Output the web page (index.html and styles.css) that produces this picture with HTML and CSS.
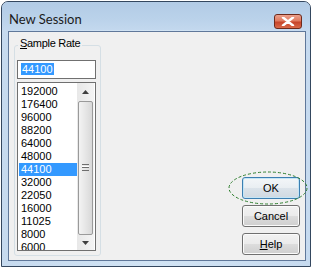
FILE: index.html
```html
<!DOCTYPE html>
<html>
<head>
<meta charset="utf-8">
<link rel="stylesheet" href="styles.css">
</head>
<body>
<div class="window">
  <div class="titlebar">
    <span class="title">New Session</span>
    <div class="close">
      <svg width="14" height="9" viewBox="0 0 14 9"><path d="M2 0.5 L12 8.5 M12 0.5 L2 8.5" stroke="#ffffff" stroke-width="2.4" stroke-linecap="round"/></svg>
    </div>
  </div>
  <div class="client">
    <div class="group">
      <span class="legend"><u>S</u>ample Rate</span>
      <div class="edit"><span class="sel">44100</span></div>
      <div class="list">
        <div class="items">
          <div class="item">192000</div>
          <div class="item">176400</div>
          <div class="item">96000</div>
          <div class="item">88200</div>
          <div class="item">64000</div>
          <div class="item">48000</div>
          <div class="item selected">44100</div>
          <div class="item">32000</div>
          <div class="item">22050</div>
          <div class="item">16000</div>
          <div class="item">11025</div>
          <div class="item">8000</div>
          <div class="item">6000</div>
        </div>
        <div class="scrollbar">
          <div class="arrow">
            <svg width="7" height="4" viewBox="0 0 7 4"><path d="M0 4 L3.5 0 L7 4 Z" fill="#404040"/></svg>
          </div>
          <div class="thumb">
            <div class="grip"></div>
          </div>
          <div class="arrow down">
            <svg width="7" height="4" viewBox="0 0 7 4"><path d="M0 0 L3.5 4 L7 0 Z" fill="#404040"/></svg>
          </div>
        </div>
      </div>
    </div>
    <div class="buttons">
      <div class="btn default">OK</div>
      <div class="btn">Cancel</div>
      <div class="btn"><u>H</u>elp</div>
    </div>
  </div>
  <svg class="mark" width="82" height="36" viewBox="0 0 82 36"><ellipse cx="41" cy="18" rx="39" ry="16" fill="none" stroke="#2f7f2f" stroke-width="1" stroke-dasharray="3 2"/></svg>
</div>
</body>
</html>
```

FILE: styles.css
```css
html, body {
  margin: 0;
  padding: 0;
  background: #ffffff;
}
body {
  width: 313px;
  height: 269px;
  overflow: hidden;
  font-family: "Liberation Sans", Arial, sans-serif;
  font-size: 11px;
  color: #000000;
}
.window {
  position: relative;
  box-sizing: border-box;
  margin: 1px 0 0 1px;
  width: 310px;
  height: 266px;
  border: 1px solid #34475f;
  border-radius: 7px 7px 0 0;
  background: linear-gradient(90deg, #c6daef 0%, #d2e4f4 50%, #c6daef 100%);
  display: flex;
  flex-direction: column;
}
.titlebar {
  height: 28px;
  border-radius: 6px 6px 0 0;
  background: linear-gradient(#b2cbe6, #bad2ea 60%, #c3d8ee);
  display: flex;
  align-items: center;
  padding: 0 7px 0 7px;
  position: relative;
}
.title {
  font-family: "Lato", "Liberation Sans", sans-serif;
  font-size: 13px;
  color: #1b1b1b;
  margin-top: 5px;
  flex: 1;
}
.close {
  box-sizing: border-box;
  width: 28px;
  height: 15px;
  margin-top: 11px;
  margin-right: 1px;
  border: 1px solid #6e2a1c;
  border-radius: 3px;
  background: linear-gradient(#eba08c, #e07a5f 45%, #c7452b 55%, #d96a4a);
  display: flex;
  align-items: center;
  justify-content: center;
}
.client {
  box-sizing: border-box;
  margin: 1px 4px 0 6px;
  height: 230px;
  border: 1px solid #60789a;
  background: #f0f0f0;
  display: flex;
  justify-content: space-between;
}
.group {
  position: relative;
  box-sizing: border-box;
  margin: 13px 0 0 5px;
  width: 87px;
  height: 211px;
  border: 1px solid #d5dfe5;
  border-radius: 3px;
  padding: 14px 3px 0 2px;
}
.legend {
  position: absolute;
  top: -9px;
  left: 3px;
  padding: 0 2px 0 2px;
  background: #f0f0f0;
  line-height: 13px;
  letter-spacing: -0.3px;
}
.edit {
  box-sizing: border-box;
  width: 79px;
  height: 19px;
  border: 1px solid #707070;
  background: #ffffff;
  padding: 2px 0 0 3px;
  line-height: 13px;
}
.sel {
  background: #3399ff;
  color: #ffffff;
  padding: 0 1px;
}
.list {
  box-sizing: border-box;
  margin-top: 3px;
  width: 79px;
  height: 169px;
  border: 1px solid #707070;
  background: #ffffff;
  display: flex;
  overflow: hidden;
}
.items {
  width: 58px;
  margin: 1px 0 0 1px;
  padding-top: 1px;
}
.item {
  height: 13px;
  line-height: 13px;
  padding-left: 2px;
}
.item.selected {
  background: #3399ff;
  color: #ffffff;
}
.scrollbar {
  width: 17px;
  margin-left: 0;
  background: linear-gradient(90deg, #e8e8e8, #f4f4f4);
  display: flex;
  flex-direction: column;
}
.arrow {
  height: 17px;
  flex: none;
  display: flex;
  align-items: center;
  justify-content: center;
}
.arrow.down {
  height: 15px;
}
.thumb {
  box-sizing: border-box;
  flex: 1;
  margin: 1px 1px 0 1px;
  border: 1px solid #9a9a9a;
  border-radius: 2px;
  background: linear-gradient(90deg, #f3f3f3, #e6e6e6 50%, #d8d8d8);
  display: flex;
  align-items: center;
  justify-content: center;
}
.grip {
  width: 7px;
  height: 5px;
  border-top: 1px solid #6e6e6e;
  border-bottom: 1px solid #6e6e6e;
  margin-top: -2px;
  background: linear-gradient(#ffffff 0, #ffffff 1px, #6e6e6e 1px, #6e6e6e 2px, transparent 2px);
  background-position: 0 1px;
  background-repeat: no-repeat;
}
.buttons {
  align-self: flex-end;
  margin: 0 5px 5px 0;
  display: flex;
  flex-direction: column;
  gap: 6px;
}
.btn {
  box-sizing: border-box;
  width: 58px;
  height: 22px;
  border: 1px solid #707070;
  border-radius: 3px;
  background: linear-gradient(#f2f2f2, #ebebeb 50%, #dddddd 50%, #cfcfcf);
  box-shadow: inset 0 0 0 1px #fbfbfb;
  display: flex;
  align-items: center;
  justify-content: center;
  line-height: 13px;
}
.btn.default {
  border-color: #3c7fb1;
  box-shadow: inset 0 0 0 1px #c4e5f6;
  background: linear-gradient(#f3f6f8, #e9eef2 50%, #dbe3ea 50%, #d0d9e1);
}
.mark {
  position: absolute;
  left: 225px;
  top: 168px;
}
```
